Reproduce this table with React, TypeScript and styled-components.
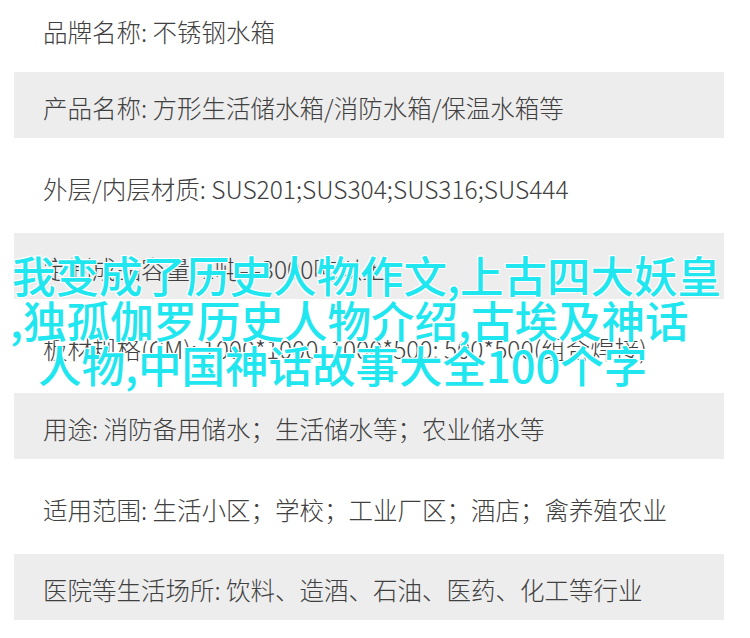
import styled, { createGlobalStyle } from "styled-components";

const GlobalStyle = createGlobalStyle`
    body {
        margin: 0;
        background: #ffffff;
        font-family: "Noto Sans CJK SC", "Noto Sans", sans-serif;
    }
`;

const Page = styled.div`
    position: relative;
    width: 750px;
    height: 638px;
    overflow: hidden;
    background: #ffffff;
`;

const SpecList = styled.div`
    display: flex;
    flex-direction: column;
    gap: 14.3px;
    width: 710px;
    margin-left: 14px;
`;

const SpecRow = styled.div<{ $shaded?: boolean; $first?: boolean }>`
    display: flex;
    align-items: center;
    height: ${p => (p.$first ? "58px" : "66px")};
    padding: 5px 0 0 29px;
    box-sizing: border-box;
    background: ${p => (p.$shaded ? "#ededed" : "transparent")};
    color: #404040;
    font-size: 24.5px;
    font-weight: 300;
    white-space: nowrap;
`;

const Title = styled.div`
    position: absolute;
    top: 252px;
    left: 0;
    width: 750px;
    color: #1fe6ef;
    font-family: "Noto Sans CJK SC", sans-serif;
    font-size: 43.5px;
    font-weight: 500;
    line-height: 45px;
    text-shadow: 0 0 2px #fff, 1px 1px 0 #fff, -1px -1px 0 #fff, 1px -1px 0 #fff, -1px 1px 0 #fff;
`;

const TitleLine = styled.div<{ $indent: number }>`
    padding-left: ${p => p.$indent}px;
    white-space: nowrap;
`;

const specs = [
    "品牌名称: 不锈钢水箱",
    "产品名称: 方形生活储水箱/消防水箱/保温水箱等",
    "外层/内层材质: SUS201;SUS304;SUS316;SUS444",
    "定制成品容量: 1吨—3000吨以上",
    "板材规格(CM): 1000*1000; 1000*500; 500*500(组合焊接)",
    "用途: 消防备用储水；生活储水等；农业储水等",
    "适用范围: 生活小区；学校；工业厂区；酒店；禽养殖农业",
    "医院等生活场所: 饮料、造酒、石油、医药、化工等行业",
];

export default function App() {
    return (
        <Page>
            <GlobalStyle />
            <SpecList>
                {specs.map((text, i) => (
                    <SpecRow key={i} $shaded={i % 2 === 1} $first={i === 0}>
                        {text}
                    </SpecRow>
                ))}
            </SpecList>
            <Title>
                <TitleLine $indent={12}>我变成了历史人物作文,上古四大妖皇</TitleLine>
                <TitleLine $indent={10}>,独孤伽罗历史人物介绍,古埃及神话</TitleLine>
                <TitleLine $indent={38}>人物,中国神话故事大全100个字</TitleLine>
            </Title>
        </Page>
    );
}
